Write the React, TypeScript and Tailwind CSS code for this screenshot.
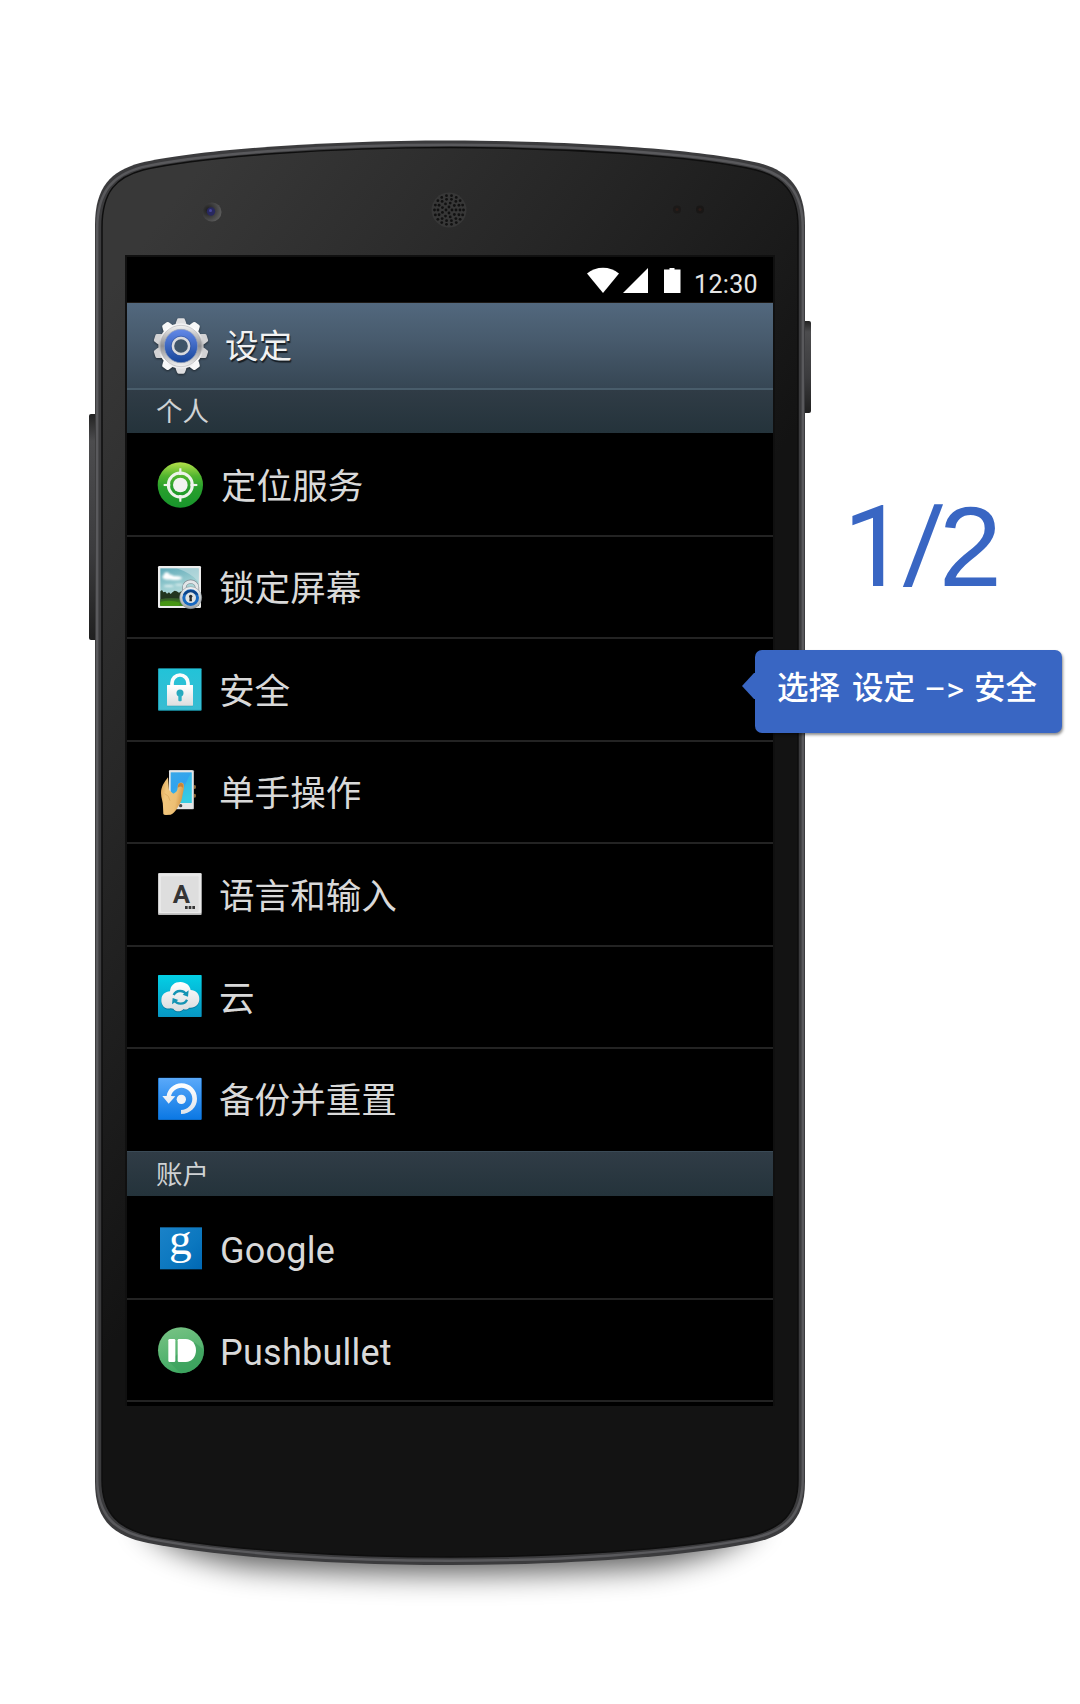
import type { ReactNode } from "react";

const CJK = "font-['Noto_Sans_CJK_SC',sans-serif]";

function Stops({ id, from, to }: { id: string; from: string; to: string }) {
  return (
    <linearGradient id={id} x1="0" y1="0" x2="0" y2="1">
      <stop offset="0" stopColor={from} />
      <stop offset="1" stopColor={to} />
    </linearGradient>
  );
}

function Icon({ box, children }: { box: string; children: ReactNode }) {
  return (
    <svg viewBox={box} className="size-[50px] shrink-0 overflow-visible">
      {children}
    </svg>
  );
}

function GearIcon() {
  const teeth = [0, 36, 72, 108, 144, 180, 216, 252, 288, 324];
  return (
    <svg viewBox="-90 -90 180 180" className="size-[60px] shrink-0 drop-shadow-[0_1px_1px_rgba(0,0,0,0.5)]">
      <defs>
        <linearGradient id="gearTeeth" gradientUnits="userSpaceOnUse" x1="0" y1="-84" x2="0" y2="84">
          <stop offset="0" stopColor="#e2e2e4" />
          <stop offset="0.2" stopColor="#ffffff" />
          <stop offset="0.5" stopColor="#b4b4b6" />
          <stop offset="0.75" stopColor="#ffffff" />
          <stop offset="1" stopColor="#dcdcde" />
        </linearGradient>
        <linearGradient id="gearRim" x1="0" y1="0" x2="0" y2="1">
          <stop offset="0" stopColor="#f4f4f4" />
          <stop offset="0.5" stopColor="#8f8f92" />
          <stop offset="1" stopColor="#f2f2f2" />
        </linearGradient>
        <Stops id="gearBlue" from="#6389e8" to="#16459a" />
      </defs>
      {teeth.map((angle) => (
        <path
          key={angle}
          d="M-19 -55 L-15 -71 L-12 -79 Q-11 -83 -7 -83 H7 Q11 -83 12 -79 L15 -71 L19 -55 Z"
          fill={angle % 180 === 0 ? "#dfdfe1" : angle === 72 || angle === 108 || angle === 252 || angle === 288 ? "#d2d2d4" : "#f8f8f8"}
          transform={`rotate(${angle})`}
        />
      ))}
      <circle r="68" fill="url(#gearTeeth)" />
      <circle r="62" fill="url(#gearRim)" stroke="#a5a5a8" strokeWidth="1.5" />
      <circle r="50" fill="url(#gearBlue)" stroke="#9aa4b8" strokeWidth="2" />
      <circle r="24.5" fill="#3f5468" stroke="#d9dade" strokeWidth="8" />
      <circle r="29.5" fill="none" stroke="#2a4a8c" strokeWidth="1.5" />
    </svg>
  );
}

function LocationIcon() {
  return (
    <Icon box="45 59 150 150">
      <defs>
        <linearGradient id="locBg" x1="0" y1="0" x2="0" y2="1">
          <stop offset="0" stopColor="#b4e04a" />
          <stop offset="0.3" stopColor="#52b52f" />
          <stop offset="0.55" stopColor="#28a02c" />
          <stop offset="1" stopColor="#18952c" />
        </linearGradient>
      </defs>
      <circle cx="121" cy="134" r="68" fill="url(#locBg)" />
      <circle cx="121" cy="134" r="36" fill="none" stroke="#eef3ec" strokeWidth="9" />
      <circle cx="121" cy="134" r="22" fill="#f1f3f0" />
      <path d="M117 104 L118 84 H124 L125 104Z M117 164 L118 184 H124 L125 164Z M91 130 L71 131 V137 L91 138Z M151 130 L172 131 V137 L151 138Z" fill="#eef3ec" />
    </Icon>
  );
}

function LockScreenIcon() {
  return (
    <Icon box="45 366 150 150">
      <defs>
        <linearGradient id="sky" x1="0" y1="0" x2="0.3" y2="1">
          <stop offset="0" stopColor="#5fa9b8" />
          <stop offset="0.5" stopColor="#98ccd0" />
          <stop offset="1" stopColor="#cfe8e4" />
        </linearGradient>
        <Stops id="grass" from="#34552a" to="#3f9413" />
        <Stops id="lockRing" from="#f3f4f5" to="#9fa6aa" />
        <filter id="cloudSoft"><feGaussianBlur stdDeviation="3" /></filter>
      </defs>
      <rect x="54" y="378" width="129" height="126" rx="4" fill="#ededed" />
      <rect x="61" y="385" width="115" height="112" fill="url(#sky)" />
      <path d="M110 385H176V425Q150 398 110 385Z" fill="#c5e0e2" opacity=".6" />
      <g fill="#fff" filter="url(#cloudSoft)">
        <ellipse cx="84" cy="411" rx="17" ry="8" />
        <ellipse cx="106" cy="414" rx="20" ry="6" />
        <ellipse cx="80" cy="402" rx="8" ry="5" />
        <ellipse cx="86" cy="438" rx="15" ry="3" opacity=".7" />
        <ellipse cx="117" cy="434" rx="12" ry="3" opacity=".6" />
      </g>
      <path d="M61 497V454L66 450 70 457 76 455 81 461 87 457 92 462 98 456 104 452 110 454 117 458 124 454 176 462V497Z" fill="#22351f" />
      <path d="M61 478Q90 470 130 477V474H176V497H61Z" fill="url(#grass)" />
      <path d="M61 486Q90 478 120 488L116 497H61Z" fill="#4da012" opacity=".65" />
      <path d="M133 453V442A19 17 0 0 1 171 442V453" fill="none" stroke="#7c8990" strokeWidth="13" />
      <path d="M133 453V442A19 17 0 0 1 171 442V453" fill="none" stroke="#e2e6e8" strokeWidth="9" />
      <circle cx="152" cy="473" r="33" fill="url(#lockRing)" stroke="#81898e" strokeWidth="1.5" />
      <circle cx="152" cy="473" r="25" fill="#1768c0" />
      <path d="M129 465A25 25 0 0 1 175 465Q152 456 129 465Z" fill="#0c4286" />
      <circle cx="152" cy="473" r="16" fill="#dfe2e2" />
      <circle cx="152" cy="469" r="5" fill="#292c2e" />
      <path d="M149 470H155L156 484H148Z" fill="#292c2e" />
    </Icon>
  );
}

function SecurityIcon() {
  return (
    <Icon box="45 44 150 150">
      <defs>
        <Stops id="secBg" from="#22c3d8" to="#39bcd2" />
        <Stops id="secLock" from="#ffffff" to="#dcdedf" />
      </defs>
      <rect x="54" y="54" width="131" height="127" rx="3" fill="#1c9fb4" />
      <rect x="57" y="56" width="126" height="122" rx="2" fill="url(#secBg)" />
      <path d="M96 108V98A24 24 0 0 1 144 98V108" fill="none" stroke="#fbfcfc" strokeWidth="11" />
      <rect x="81" y="106" width="78" height="62" rx="1" fill="#219bae" />
      <rect x="81" y="104" width="78" height="62" rx="1" fill="url(#secLock)" />
      <circle cx="120" cy="128" r="10.5" fill="#27a9be" />
      <path d="M115 132H125V150Q125 153 122 153H118Q115 153 115 150Z" fill="#2bb0c5" />
    </Icon>
  );
}

function OneHandIcon() {
  return (
    <Icon box="45 351 150 150">
      <defs>
        <linearGradient id="ohScreen" x1="0" y1="0" x2="0.4" y2="1">
          <stop offset="0" stopColor="#3aa8e8" />
          <stop offset="0.5" stopColor="#31a3ef" />
          <stop offset="1" stopColor="#35d4df" />
        </linearGradient>
        <linearGradient id="skin" x1="0" y1="0" x2="1" y2="0.3">
          <stop offset="0" stopColor="#d89f4f" />
          <stop offset="0.3" stopColor="#f1c67c" />
          <stop offset="0.75" stopColor="#edbf74" />
          <stop offset="1" stopColor="#d79a48" />
        </linearGradient>
      </defs>
      <ellipse cx="164" cy="411" rx="4" ry="6" fill="#8f6a38" />
      <ellipse cx="164" cy="437" rx="4" ry="6" fill="#8f6a38" />
      <rect x="87" y="361" width="75" height="117" rx="3" fill="#b5b8ba" />
      <rect x="87" y="361" width="72" height="116" rx="3" fill="#e4e5e6" />
      <rect x="92" y="367" width="63" height="92" fill="url(#ohScreen)" />
      <path d="M155 367V459H120Q132 400 155 367Z" fill="#36c6e4" opacity=".6" />
      <path d="M84 382C72 398 63 410 63 430C63 445 70 456 69 470L70 492Q71 495 78 495L92 494Q103 490 112 474C119 462 124 456 126 444C128 430 132 420 132 408C132 400 127 397 121 398C114 399 113 405 113 414C112 424 107 428 100 431L87 420Z" fill="url(#skin)" />
      <path d="M113 414C113 404 116 399 122 399C129 399 131 406 129 413Q120 405 113 414Z" fill="#c98437" />
      <path d="M74 431Q88 436 90 452" fill="none" stroke="#d8a45a" strokeWidth="2" />
      <circle cx="122" cy="467" r="5" fill="#454749" />
    </Icon>
  );
}

function LanguageIcon() {
  return (
    <Icon box="45 57 150 150">
      <rect x="54" y="69" width="131" height="126" rx="3" fill="#b8b8b8" />
      <rect x="56" y="70" width="128" height="120" rx="3" fill="#e9e9e9" />
      <rect x="63" y="79" width="113" height="107" rx="3" fill="#dedede" />
      <text x="124" y="159" textAnchor="middle" fontSize="77" fontWeight="700" fill="#353535" fontFamily="Roboto, sans-serif">A</text>
      <path d="M135 168h8v9h-8zM146 168h8v9h-8zM157 168h8v9h-8z" fill="#353535" />
    </Icon>
  );
}

const CLOUD =
  "M92 475C76 479 63 467 64 449C65 433 76 425 90 424C91 406 104 396 121 396C138 396 150 407 152 420C167 420 178 431 178 447C178 464 165 475 148 473C142 479 135 480 131 477C122 487 106 486 100 476Q96 475 92 475Z";

function CloudIcon() {
  return (
    <Icon box="45 366 150 150">
      <defs>
        <Stops id="cloudBg" from="#03d0e5" to="#0796c3" />
        <Stops id="cloudFill" from="#ffffff" to="#d9dcde" />
      </defs>
      <rect x="54" y="375" width="131" height="126" rx="2" fill="url(#cloudBg)" />
      <path d={CLOUD} transform="translate(0 3)" fill="#067ba2" />
      <path d={CLOUD} fill="url(#cloudFill)" />
      <path d="M101 435A21 20 0 0 1 139 434" fill="none" stroke="#1494b4" strokeWidth="7" />
      <path d="M146 421L144 440 128 434Z" fill="#1494b4" />
      <path d="M141 449A21 20 0 0 1 103 450" fill="none" stroke="#1494b4" strokeWidth="7" />
      <path d="M96 463L98 444 115 450Z" fill="#1494b4" />
    </Icon>
  );
}

function BackupIcon() {
  return (
    <Icon box="45 44 150 150">
      <defs>
        <Stops id="bkBg" from="#5aa9fa" to="#0b78e4" />
        <Stops id="bkArrow" from="#ffffff" to="#dfe4ea" />
      </defs>
      <rect x="54" y="52" width="131" height="127" rx="3" fill="#0d66be" />
      <rect x="56" y="53" width="128" height="124" rx="2" fill="url(#bkBg)" />
      <path d="M80 107C83 86 102 69 124 69C151 69 171 89 171 115C171 141 151 160 123 161V149C143 148 157 133 157 115C157 97 143 82 124 82C109 82 96 93 93 107L106 108 86 130 67 107Z" fill="url(#bkArrow)" />
      <circle cx="124" cy="117" r="14" fill="#f2f4f6" />
    </Icon>
  );
}

function GoogleIcon() {
  return (
    <Icon box="45 38 150 150">
      <defs>
        <linearGradient id="gBg" x1="0" y1="0" x2="1" y2="1">
          <stop offset="0" stopColor="#1a82c8" />
          <stop offset="0.6" stopColor="#0b77bf" />
          <stop offset="1" stopColor="#0068b4" />
        </linearGradient>
      </defs>
      <rect x="60" y="51" width="126" height="126" fill="url(#gBg)" />
      <text x="121" y="131" textAnchor="middle" fontSize="136" fill="#fff" fontFamily="'Liberation Serif', serif">g</text>
    </Icon>
  );
}

function PushbulletIcon() {
  return (
    <Icon box="45 345 150 150">
      <defs>
        <linearGradient id="pbBg" x1="0" y1="0" x2="0.3" y2="1">
          <stop offset="0" stopColor="#7ac486" />
          <stop offset="1" stopColor="#42ab64" />
        </linearGradient>
        <clipPath id="pbClip"><circle cx="123" cy="421" r="69" /></clipPath>
      </defs>
      <circle cx="123" cy="421" r="69" fill="url(#pbBg)" />
      <path d="M86 454L130 498H200V425L162 396Z" fill="#3b9f5c" opacity=".6" clipPath="url(#pbClip)" />
      <rect x="85" y="387" width="21" height="69" rx="4" fill="#fff" />
      <path d="M117 387H137C156 387 168 402 168 421C168 440 156 456 137 456H117Q113 456 113 452V391Q113 387 117 387Z" fill="#fff" />
    </Icon>
  );
}

function Row({ icon, label, first }: { icon: ReactNode; label: string; first?: boolean }) {
  return (
    <div
      className={
        "flex items-center border-b-2 border-[#232323] pl-7 " +
        (first ? "h-[104px] pt-[2px]" : "h-[102.4px]")
      }
    >
      {icon}
      <span className={"pb-[2px] text-[35.6px] leading-none text-[#d9d9d9] " + (first ? "ml-[16px]" : "ml-[14px]")}>{label}</span>
    </div>
  );
}

function LatinRow({ icon, label, first }: { icon: ReactNode; label: string; first?: boolean }) {
  return (
    <div
      className={
        "flex items-center border-b-2 border-[#232323] pl-7 font-[Roboto,sans-serif] " +
        (first ? "h-[104px] pt-[2px]" : "h-[102.4px]")
      }
    >
      {icon}
      <span className="ml-[15px] pt-1.5 text-[36px] leading-none tracking-[0.25px] text-[#d9d9d9]">{label}</span>
    </div>
  );
}

const BODY =
  "M6 85C6 47 22 31 51 23C110 9 245 0.5 361 0.5C477 0.5 612 9 670 23C699 31 716 47 716 85V1342C716 1380 698 1396 663 1403C585 1418 470 1425 361 1425C252 1425 137 1418 59 1403C24 1396 6 1380 6 1342Z";
const FACE =
  "M13 87C13 51 28 37 54 30C114 16 246 7.5 361 7.5C476 7.5 608 16 667 30C693 37 709 51 709 87V1340C709 1374 692 1389 660 1396C582 1410 470 1417 361 1417C252 1417 140 1410 62 1396C30 1389 13 1374 13 1340Z";

function PhoneBody() {
  const rings = [
    { r: 3, n: 4 },
    { r: 7, n: 9 },
    { r: 11, n: 14 },
    { r: 14.5, n: 18 },
  ];
  return (
    <svg viewBox="0 0 722 1500" className="absolute left-0 top-0 h-[1500px] w-[722px] overflow-visible">
      <defs>
        <linearGradient id="face" gradientUnits="userSpaceOnUse" x1="100" y1="40" x2="610" y2="420">
          <stop offset="0" stopColor="#383838" />
          <stop offset="0.5" stopColor="#262626" />
          <stop offset="1" stopColor="#131313" />
        </linearGradient>
        <linearGradient id="btn" x1="0" y1="0" x2="0" y2="1">
          <stop offset="0" stopColor="#222" />
          <stop offset="0.12" stopColor="#4c4c4e" />
          <stop offset="0.6" stopColor="#3c3c3e" />
          <stop offset="1" stopColor="#202020" />
        </linearGradient>
        <filter id="shadow" x="-20%" y="-200%" width="140%" height="500%">
          <feGaussianBlur stdDeviation="15" />
        </filter>
        <radialGradient id="cam" cx="0.3" cy="0.4" r="0.75">
          <stop offset="0" stopColor="#1b1b1b" />
          <stop offset="1" stopColor="#606060" />
        </radialGradient>
      </defs>
      <path d="M50 1375Q361 1400 672 1375Q655 1412 560 1426Q361 1440 162 1426Q67 1412 50 1375Z" fill="#000" opacity=".66" filter="url(#shadow)" />
      <rect x="0" y="274" width="8" height="226" rx="2" fill="url(#btn)" />
      <rect x="714" y="181" width="8" height="92" rx="2" fill="url(#btn)" />
      <path d={BODY} fill="#3b3b3d" />
      <path d={BODY} fill="none" stroke="#59595c" strokeWidth="2.5" transform="translate(2.2 4.3) scale(.9939 .994)" />
      <path d={FACE} fill="url(#face)" stroke="#0e0e0e" strokeWidth="1.5" />
      <circle cx="123" cy="72" r="9.5" fill="url(#cam)" />
      <circle cx="122" cy="71.5" r="4.2" fill="#28285f" />
      <circle cx="121.5" cy="70.5" r="1.5" fill="#4646a0" />
      <circle cx="360" cy="70" r="17.5" fill="#373737" />
      {rings.map(({ r, n }) =>
        Array.from({ length: n }, (_, i) => {
          const a = (i / n) * Math.PI * 2;
          return <circle key={`${r}-${i}`} cx={360 + r * Math.cos(a)} cy={70 + r * Math.sin(a)} r="1.4" fill="#111" />;
        }),
      )}
      <circle cx="588" cy="69.5" r="4" fill="#1b1918" />
      <circle cx="588" cy="69.5" r="1.6" fill="#2c1c18" />
      <circle cx="611" cy="69.5" r="4" fill="#191716" />
      <circle cx="611" cy="69.5" r="1.6" fill="#2a1b18" />
    </svg>
  );
}

function StatusBar() {
  return (
    <div className="flex h-[45px] items-start justify-end border-b border-[#1c1815] pr-[15px]">
      <svg viewBox="0 0 96 28" className="mt-[9px] h-7 w-24" fill="#fff">
        <path d="M0 6.5C9 -1.2 23 -1.2 32 6.5L16 26Z" />
        <path d="M36 26L61 1V26Z" />
        <path d="M77 2.5H82.5V1H87.5V2.5H93.5V26H77Z" />
      </svg>
      <span className="mt-[13px] ml-[11px] font-[Roboto,sans-serif] text-[25px] leading-7 tracking-[0.35px] text-[#e6e6e6]">12:30</span>
    </div>
  );
}

function Screen() {
  return (
    <div className="relative ml-[36px] w-[650px] border-2 border-b-0 border-[#101010] bg-black pt-px">
      <div className={"h-[1148px] bg-black " + CJK}>
        <StatusBar />
        <header className="flex h-[85px] items-center bg-linear-to-b from-[#52687e] via-[#475a6c] via-45% to-[#364654] pl-6">
          <GearIcon />
          <h1 className="ml-[14px] pb-[3px] text-[33.5px] leading-none text-[#f2f2f2] [text-shadow:1px_2px_1px_rgba(0,0,0,0.65)]">设定</h1>
        </header>
        <h2 className="flex h-[45px] items-center border-t-2 border-[#495d6b] bg-linear-to-b from-[#303c46] to-[#24333b] pb-[2px] pl-[29px] text-[26.5px] leading-none text-[#cfd2d4]">个人</h2>
        <Row first icon={<LocationIcon />} label="定位服务" />
        <Row icon={<LockScreenIcon />} label="锁定屏幕" />
        <Row icon={<SecurityIcon />} label="安全" />
        <Row icon={<OneHandIcon />} label="单手操作" />
        <Row icon={<LanguageIcon />} label="语言和输入" />
        <Row icon={<CloudIcon />} label="云" />
        <div className="flex h-[102px] items-center pl-7">
          <BackupIcon />
          <span className="ml-[14px] pb-[4px] text-[35.6px] leading-none text-[#d9d9d9]">备份并重置</span>
        </div>
        <h2 className="flex h-[45px] items-center border-t border-[#3a4a56] bg-linear-to-b from-[#303c46] to-[#24333b] pb-[2px] pl-[29px] text-[26.5px] leading-none text-[#cfd2d4]">账户</h2>
        <LatinRow first icon={<GoogleIcon />} label="Google" />
        <LatinRow icon={<PushbulletIcon />} label="Pushbullet" />
      </div>
    </div>
  );
}

function Callout() {
  return (
    <div className={"relative -ml-[56px] mt-[33px] flex h-[83px] w-[307px] items-start rounded-[7px] bg-[#3966c3] pt-[18px] pl-[22px] text-[31.5px] leading-[34px] font-medium text-white shadow-[1px_2px_3px_rgba(0,0,0,0.45)] " + CJK}>
      <svg viewBox="0 0 14 26" className="absolute -left-[13px] top-[23px] h-[26px] w-[14px]" fill="#3966c3">
        <path d="M14 0V26H12L0 13 12 0Z" />
      </svg>
      <span className="w-[75px]">选择</span>
      <span className="w-[72px]">设定</span>
      <span className="w-[50px] pt-[4px] font-[Roboto,sans-serif] text-[34px] font-normal">–&gt;</span>
      <span>安全</span>
    </div>
  );
}

export default function App() {
  return (
    <main className="flex h-[1704px] w-[1080px] overflow-hidden bg-white pt-[140px] pl-[89px]">
      <div className="relative h-[1424px] w-[722px] shrink-0 pt-[115px]">
        <PhoneBody />
        <Screen />
      </div>
      <aside className="relative w-[269px] shrink-0 pt-[337px]">
        <p className="flex h-[140px] items-center pl-[32px] text-[113px] leading-none text-[#3966c3]">
          <span className="font-[Roboto,sans-serif]">1</span>
          <span className="inline-block -skew-x-6 font-['Liberation_Sans',sans-serif]">/</span>
          <span className="ml-px font-['Liberation_Sans',sans-serif]">2</span>
        </p>
        <Callout />
      </aside>
    </main>
  );
}
